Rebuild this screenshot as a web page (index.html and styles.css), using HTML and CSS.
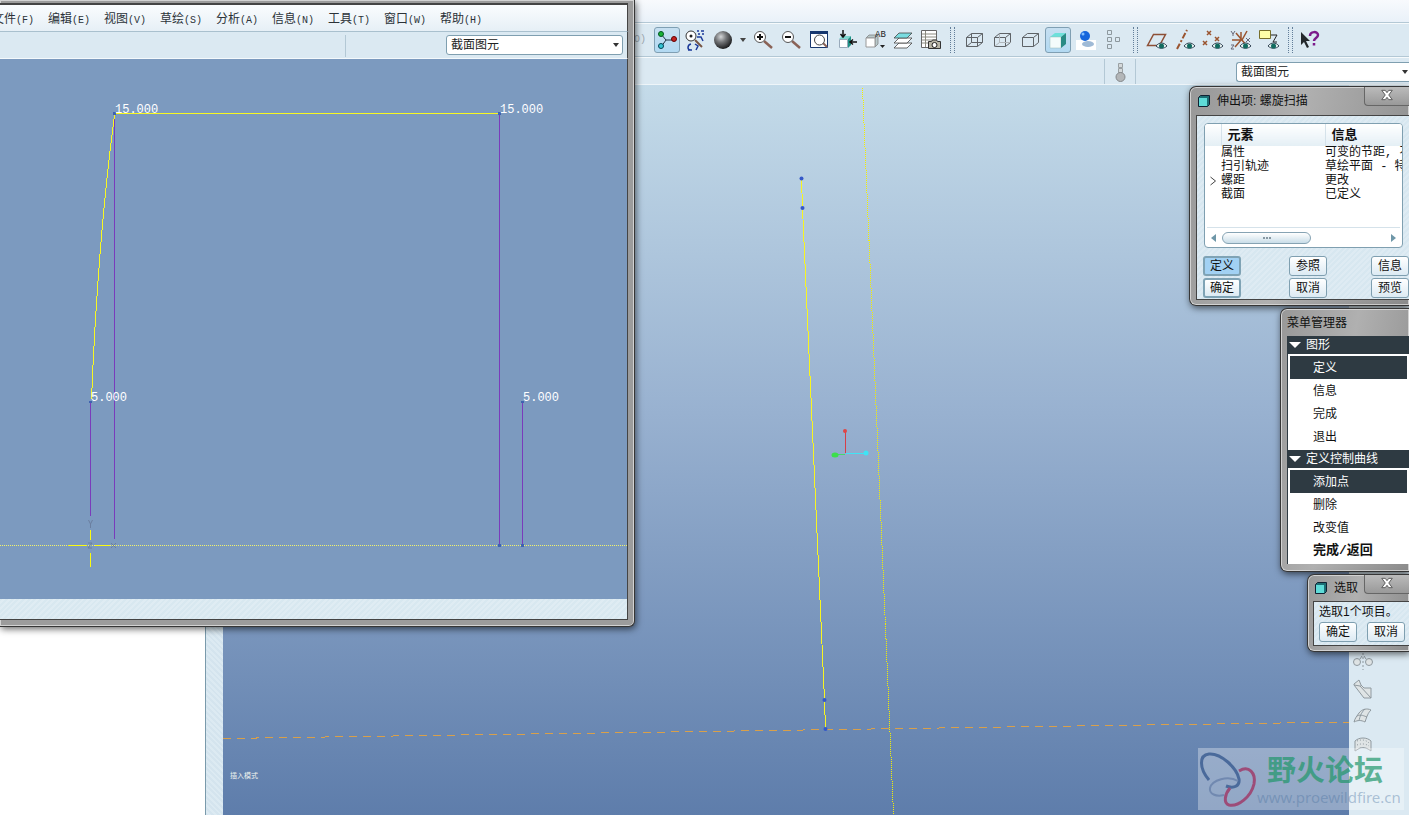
FILE: index.html
```html
<!DOCTYPE html>
<html lang="zh-CN">
<head>
    <meta charset="UTF-8">
    <title>伸出项: 螺旋扫描</title>
    <meta name="viewport" content="width=device-width, initial-scale=1">
    <link rel="stylesheet" href="styles.css">
</head>
<body>
<div class="app">
    <div class="app-menu"></div>

    <div class="toolbar">
        <span class="toolbar-start">(O)</span>
        <button class="tool active" aria-label="旋转中心"><svg viewBox="0 0 24 24"><path d="M6 6l5 6h9M11 12l-5 7" fill="none" stroke="#234" stroke-width="1"/><circle cx="6" cy="6" r="2.5" fill="#19b336" stroke="#052"/><circle cx="19" cy="11" r="2.5" fill="#c32222" stroke="#600"/><circle cx="6" cy="18" r="2.5" fill="#35c5d5" stroke="#045"/></svg></button>
        <button class="tool" aria-label="定向模式"><svg viewBox="0 0 24 24" fill="none"><circle cx="8" cy="8" r="5" fill="#fff" stroke="#333"/><circle cx="8" cy="8" r="1.5" fill="#222"/><path d="M12 12l7 7" stroke="#754" stroke-width="2"/><path d="M14 3h2M18 3h3M15 6h2M19 6h2M14 9h4l2 4M8 16c-4 1-4 6 0 6M5 22h4M12 16l3 2-2 4" stroke="#1c3a9a" stroke-width="1.5"/></svg></button>
        <button class="tool" aria-label="外观库"><svg viewBox="0 0 24 24"><defs><radialGradient id="ball" cx=".38" cy=".32" r=".68"><stop offset="0" stop-color="#d4d6d8"/><stop offset=".45" stop-color="#747679"/><stop offset="1" stop-color="#1d1e20"/></radialGradient></defs><circle cx="12" cy="12" r="9" fill="url(#ball)"/></svg></button>
        <button class="tool drop" aria-label="更多外观"><svg viewBox="0 0 10 24"><path d="M2 10h6l-3 4z" fill="#444"/></svg></button>
        <button class="tool" aria-label="放大"><svg viewBox="0 0 24 24" fill="none"><path d="M13 13l8 7" stroke="#8a6256" stroke-width="2.5"/><circle cx="9" cy="9" r="5.5" fill="#fff" stroke="#555"/><path d="M9 6v6M6 9h6" stroke="#111" stroke-width="2"/></svg></button>
        <button class="tool" aria-label="缩小"><svg viewBox="0 0 24 24" fill="none"><path d="M13 13l8 7" stroke="#8a6256" stroke-width="2.5"/><circle cx="9" cy="9" r="5.5" fill="#fff" stroke="#555"/><path d="M6 9h6" stroke="#111" stroke-width="2"/></svg></button>
        <button class="tool" aria-label="重新调整"><svg viewBox="0 0 24 24" fill="none"><path d="M3.5 3.5h17v16h-17z" fill="#fff" stroke="#17376e"/><path d="M3 3h18v3H3z" fill="#17376e"/><path d="M16 15l4 4" stroke="#8a6256" stroke-width="2"/><circle cx="12.5" cy="12" r="5" fill="#fff" stroke="#444"/></svg></button>
        <button class="tool" aria-label="重定向"><svg viewBox="0 0 24 24"><path d="M4 11l3-3h9l-3 3z" fill="#7fd6cf"/><path d="M4.5 11.5h8v8h-8z" fill="#fff" stroke="#9ab"/><path d="M13 11l3-3v9l-3 3z" fill="#1f9185"/><path d="M8 2v6M5.500 6L8 9l2.500-3M22 14h-6M18 11.500L15 14l3 2.500" fill="none" stroke="#111" stroke-width="1.5"/></svg></button>
        <button class="tool" aria-label="保存视图"><svg viewBox="0 0 24 24"><path d="M3 10l3-3h9l-3 3zM12 10l3-3v9l-3 3z" fill="#b9c9cb" stroke="#777" stroke-width=".7"/><path d="M3 10h9v9H3z" fill="#fff" stroke="#999"/><text x="12" y="9" class="icon-text">AB</text><path d="M17 17h5l-2.500 3z" fill="#222"/></svg></button>
        <button class="tool" aria-label="图层"><svg viewBox="0 0 24 24" stroke="#444" stroke-width=".8"><path d="M3 20l5-5h13l-5 5z" fill="#fff"/><path d="M3 15l5-5h13l-5 5z" fill="#fff"/><path d="M3 10l5-5h13l-5 5z" fill="#79dce0"/></svg></button>
        <button class="tool" aria-label="视图管理器"><svg viewBox="0 0 24 24"><path d="M2.500 2.500h15v17h-15z" fill="#fff" stroke="#666"/><path d="M3 6h14M3 9h14M3 12h14M3 15h14M6.500 3v16" stroke="#8b8b80" fill="none"/><path d="M9.500 13.500h3l1-1.500h4l1 1.500h3v7h-12z" fill="#b8b5a6" stroke="#333"/><circle cx="15.500" cy="17" r="2.500" fill="#fff" stroke="#222"/></svg></button>
        <span class="grip"></span>
        <button class="tool" aria-label="线框"><svg viewBox="0 0 24 24" class="line"><path d="M4.500 9.500h11v9h-11zM9.500 5.500h11v9h-11zM4.500 9.500l5-4M15.500 9.500l5-4M4.500 18.500l5-4M15.500 18.500l5-4"/></svg></button>
        <button class="tool" aria-label="隐藏线"><svg viewBox="0 0 24 24" class="line"><path d="M4.500 9.500h11v9h-11zM4.500 9.500l5-4h11v9l-5 4M15.500 9.500l5-4"/><path d="M9.500 6v8.500h11M4.500 18.500l5-4" stroke="#b0b6ba"/></svg></button>
        <button class="tool" aria-label="无隐藏线"><svg viewBox="0 0 24 24" class="line"><path d="M4.500 9.500h11v9h-11zM4.500 9.500l5-4h11v9l-5 4M15.500 9.500l5-4"/></svg></button>
        <button class="tool active" aria-label="着色"><svg viewBox="0 0 24 24"><path d="M4 9l5-4h11l-5 4z" fill="#6ee0da"/><path d="M4 9h11v11H4z" fill="#f4fbfb" stroke="#9bb" stroke-width=".5"/><path d="M15 9l5-4v11l-5 4z" fill="#288a85"/></svg></button>
        <button class="tool" aria-label="增强的真实感"><svg viewBox="0 0 24 24"><path d="M2 12h20v10H2z" fill="#fff"/><ellipse cx="14" cy="16" rx="6" ry="3" fill="#9fbad6"/><circle cx="11" cy="8" r="5" fill="#1566dc"/><circle cx="9" cy="6" r="1.500" fill="#82c0ff"/></svg></button>
        <button class="tool" aria-label="模型树"><svg viewBox="0 0 24 24" fill="none" stroke="#8d989e"><path d="M5.500 2.500h4v4h-4zM5.500 9.500h4v4h-4zM5.500 16.500h4v4h-4zM13.500 9.500h4v4h-4z"/></svg></button>
        <span class="grip"></span>
        <button class="tool" aria-label="基准平面"><svg viewBox="0 0 24 24"><path d="M2.500 17.500l6-11h12l-6 11z" fill="none" stroke="#8d4f36" stroke-width="1.5"/><use href="#eye"/></svg></button>
        <button class="tool" aria-label="基准轴"><svg viewBox="0 0 24 24"><path d="M4 21L14 2" fill="none" stroke="#9a542f" stroke-width="2" stroke-dasharray="6 2 2 2"/><use href="#eye"/></svg></button>
        <button class="tool" aria-label="基准点"><svg viewBox="0 0 24 24"><path d="M6 3l4 4M10 3L6 7M14 9l4 4M18 9l-4 4M2 13l4 4M6 13l-4 4" fill="none" stroke="#9a542f" stroke-width="1.5"/><use href="#eye"/></svg></button>
        <button class="tool" aria-label="坐标系"><svg viewBox="0 0 24 24"><path d="M3 12h10l5-9M7 5l11 13M12 12l-6 7M12 12V4" fill="none" stroke="#9a542f" stroke-width="1.5"/><path d="M2 3l2 3 2-3M4 6v2M17 10l4 4M21 10l-4 4M2 17h3l-3 4h3" fill="none" stroke="#667"/><use href="#eye"/></svg></button>
        <button class="tool" aria-label="注释"><svg viewBox="0 0 24 24"><path d="M2.500 2.500h11v8h-11z" fill="#ffffa8" stroke="#776f2b"/><path d="M14 7h6l-4 7h4" fill="none" stroke="#222"/><use href="#eye"/></svg></button>
        <span class="grip"></span>
        <button class="tool" aria-label="帮助"><svg viewBox="0 0 24 24"><path d="M1 4v13l3-3 3 6 2-1-3-6h4z" fill="#24292d"/><path d="M10 8c0-5 8-5 8-1 0 3-4 3-4 6M14 15v2.500" fill="none" stroke="#7c1a8b" stroke-width="2.5"/></svg></button>
    </div>

    <div class="filter-bar">
        <div class="status-light"><svg viewBox="0 0 14 22" width="14" height="22"><path d="M5.500 2.500h4v4h-4zM5.500 7.500h4v4h-4z" fill="#d4d9db" stroke="#9aa0a3"/><circle cx="7.500" cy="16" r="4.500" fill="#b3b6b8" stroke="#85898c"/></svg></div>
        <div class="combo main-combo"><select aria-label="选取过滤器"><option>截面图元</option></select></div>
    </div>

    <div class="work">
        <div class="tree"></div>
        <div class="sash"></div>
        <div class="viewport">
            <svg class="model">
                <path class="crisp" d="M639.500 3L670.500 730" fill="none" stroke="#f4f000" stroke-dasharray="1 1"/>
                <path class="crisp" d="M0 653.500L1126 637" fill="none" stroke="#d9a04a" stroke-dasharray="8 6"/>
                <path class="crisp" d="M578.500 93l1 30 22 492 1 29" fill="none" stroke="#f8f520"/>
                <g fill="#3558c8"><circle cx="578.500" cy="93.500" r="2"/><circle cx="579.500" cy="123" r="2"/><circle cx="601.500" cy="615" r="2"/><circle cx="602.500" cy="644" r="2"/></g>
                <path d="M622.500 347v21" stroke="#d63f48"/><path d="M623 368.500h20" stroke="#3fe4f5"/><path d="M613 369.500h9" stroke="#45d96c"/>
                <circle cx="622" cy="346" r="2" fill="#e04545"/><circle cx="643" cy="368" r="2.500" fill="#3fe4f5"/><ellipse cx="612" cy="370" rx="3.500" ry="2.500" fill="#3ce04b"/>
                <text x="7" y="693" class="mode">插入模式</text>
            </svg>
        </div>
        <div class="side-tools">
            <button class="tool" aria-label="镜像"><svg viewBox="0 0 24 24" class="ghost"><circle cx="6" cy="13" r="3.500"/><path d="M9 10l2-3M15 10l-2-3"/><circle cx="18" cy="13" r="3.500"/><path d="M12 4v17" stroke-dasharray="2 2"/></svg></button>
            <button class="tool" aria-label="延伸"><svg viewBox="0 0 24 24" class="ghost"><path d="M3 7l5-4 2 5 3 3h7v10h-7L3 8z"/><path d="M3 8l6 1 1 0M9 9l11 12"/></svg></button>
            <button class="tool" aria-label="修剪"><svg viewBox="0 0 24 24" class="ghost"><path d="M3 17c1-4 3-6 5-9 3-4 8-5 12-3-3 3-4 6-6 12-4-2-7-2-11 0zM6 11c4-2 7 0 10 1M14 4c-4 4-5 7-6 12"/></svg></button>
            <button class="tool" aria-label="曲面"><svg viewBox="0 0 24 24" class="ghost"><path d="M4 8c4-4 12-4 16 0v10c-4-3-7-4-11-3l-5 3z"/><path d="M6 8c5-2 9-1 12 2M6 12c5-2 9-1 12 1" stroke-dasharray="1 2"/></svg></button>
        </div>
    </div>
</div>

<!-- 草绘子窗口 -->
<section class="window sketch">
    <nav class="menu">
        <button>文件<span>(F)</span></button>
        <button>编辑<span>(E)</span></button>
        <button>视图<span>(V)</span></button>
        <button>草绘<span>(S)</span></button>
        <button>分析<span>(A)</span></button>
        <button>信息<span>(N)</span></button>
        <button>工具<span>(T)</span></button>
        <button>窗口<span>(W)</span></button>
        <button>帮助<span>(H)</span></button>
    </nav>
    <div class="sketch-bar">
        <div class="combo"><select aria-label="草绘过滤器"><option>截面图元</option></select></div>
    </div>
    <div class="sketch-area">
        <svg>
            <path class="crisp" d="M0 486.500h628" stroke="#f4f46a" stroke-dasharray="1 1"/>
            <path class="crisp" d="M114.500 56v424M499.500 56v430M522.500 344v142M90.500 344v113" stroke="#7a3bbb"/>
            <path class="crisp" d="M114.500 54.500h385M114.500 56Q98 180 91.500 340" fill="none" stroke="#f8f820"/>
            <path class="crisp" d="M68 486.500h19M95 486.500h15M90.500 471v10M90.500 494v14" stroke="#fbfb10"/>
            <path d="M88.500 461l2 4 2-4M90.500 465v4M88 484h4l-4 5h4M111 484l5 5M116 484l-5 5" fill="none" stroke="#6b7fa0"/>
            <path d="M113 53h3v3h-3zM498 53h3v3h-3zM498 485h3v3h-3zM521 485h3v3h-3zM89 342h3v2h-3zM521 342h3v2h-3z" fill="#3f63b0"/>
            <g class="dims"><text x="115" y="54">15.000</text><text x="500" y="54">15.000</text><text x="91" y="342">5.000</text><text x="523" y="342">5.000</text></g>
        </svg>
    </div>
    <div class="sketch-status"></div>
</section>

<!-- 特征对话框 -->
<section class="window dialog feature">
    <header>
        <svg class="cube" viewBox="0 0 14 14"><path d="M1.500 3.500l2-2h9v9l-2 2h-9z" fill="#1d6f74" stroke="#123"/><path d="M2 4h8v8H2z" fill="#5fdcd8"/></svg>
        <h2>伸出项: 螺旋扫描</h2>
        <button class="close" aria-label="关闭"><svg viewBox="0 0 12 10"><use href="#cross"/></svg></button>
    </header>
    <div class="dialog-body">
        <div class="list">
            <table>
                <thead><tr><th class="mark"></th><th class="name">元素</th><th>信息</th></tr></thead>
                <tbody>
                    <tr><td></td><td>属性</td><td>可变的节距, 不</td></tr>
                    <tr><td></td><td>扫引轨迹</td><td>草绘平面 - 特</td></tr>
                    <tr><td class="arrow"><svg viewBox="0 0 6 10" width="6" height="10"><path d="M.5 1l5 4-5 4" fill="none" stroke="#444"/></svg></td><td>螺距</td><td>更改</td></tr>
                    <tr><td></td><td>截面</td><td>已定义</td></tr>
                </tbody>
            </table>
            <div class="scroll"><i class="left"></i><span class="thumb"></span><i class="right"></i></div>
        </div>
        <div class="actions">
            <button class="btn current">定义</button><button class="btn">参照</button><button class="btn">信息</button>
            <button class="btn default">确定</button><button class="btn">取消</button><button class="btn">预览</button>
        </div>
    </div>
</section>

<!-- 菜单管理器 -->
<section class="window dialog manager">
    <header><h2>菜单管理器</h2></header>
    <div class="manager-body">
        <h3>图形</h3>
        <div class="options">
            <button class="selected">定义</button>
            <button>信息</button>
            <button>完成</button>
            <button>退出</button>
        </div>
        <h3>定义控制曲线</h3>
        <div class="options">
            <button class="selected">添加点</button>
            <button>删除</button>
            <button>改变值</button>
            <button class="strong">完成/返回</button>
        </div>
    </div>
</section>

<section class="window dialog pick">
    <header>
        <svg class="cube" viewBox="0 0 14 14"><path d="M1.500 3.500l2-2h9v9l-2 2h-9z" fill="#1d6f74" stroke="#123"/><path d="M2 4h8v8H2z" fill="#5fdcd8"/></svg>
        <h2>选取</h2>
        <button class="close" aria-label="关闭"><svg viewBox="0 0 12 10"><use href="#cross"/></svg></button>
    </header>
    <div class="dialog-body">
        <p>选取1个项目。</p>
        <div class="pick-actions">
            <button class="btn">确定</button>
            <button class="btn">取消</button>
        </div>
    </div>
</section>

<div class="watermark">
    <svg viewBox="0 0 60 62" width="60" height="62" fill="none">
        <path d="M11 32C1 20 1 7 11 6c12-1 28 14 30 25 1 7-5 10-13 7" stroke="#4a6a9b" stroke-width="3"/>
        <path d="M40 33c-10-6-26-1-28 7-1 6 6 9 14 7" stroke="#7189b0" stroke-width="2"/>
        <path d="M41 23c10-6 17 2 15 13-3 13-16 23-25 21-6-2-4-11 1-17" stroke="#9d4c78" stroke-width="3"/>
    </svg>
    <div class="brand"><strong>野火论坛</strong><a href="#">www.proewildfire.cn</a></div>
</div>

<svg class="symbols">
    <g id="eye"><path d="M11 18c3-4 8-4 11 0-3 3-8 3-11 0z" fill="#e6f2f0" stroke="#345"/><circle cx="16.500" cy="18" r="2.500" fill="#126b60"/></g>
    <path id="cross" d="M1.500 1h3L6 3l1.500-2h3L7.500 5l3 4h-3L6 7 4.500 9h-3l3-4z" fill="#fff" stroke="#555" stroke-width=".8"/>
</svg>
</body>
</html>
```

FILE: styles.css
```css
* { box-sizing: border-box; }
body { margin: 0; height: 100vh; overflow: hidden; position: relative; background: #fff; color: #2b3238; font: 12px/14px "Liberation Sans", "Noto Sans CJK SC", sans-serif; }
button { font: inherit; color: inherit; border: 0; padding: 0; background: none; cursor: pointer; }
h2, h3, p { margin: 0; font-size: 12px; font-weight: normal; }

/* main window */
.app { height: 100%; display: flex; flex-direction: column; background: #dbe9f2; }
.app-menu { height: 23px; background: linear-gradient(#f8fafd, #e9f1f9); border-bottom: 1px solid #b3c8d5; }
.toolbar { height: 34px; display: flex; align-items: center; gap: 2px; border-top: 1px solid #f6fafc; border-bottom: 1px solid #b3c8d5; }
.toolbar-start { width: 652px; flex: none; padding-right: 6px; text-align: right; color: #9ba8b0; font: 10px/14px "Liberation Mono", monospace; }
.tool { width: 26px; height: 26px; flex: none; display: flex; align-items: center; justify-content: center; }
.tool svg { width: 24px; height: 24px; flex: none; }
.tool.drop, .tool.drop svg { width: 10px; }
.tool.active { background: linear-gradient(#c6dff1, #b2d9f2); border: 1px solid #7f9fb3; border-radius: 3px; }
.icon-text { font: 9px "Liberation Mono", monospace; fill: #222; }
.line { fill: none; stroke: #5e6367; }
.ghost { fill: #dfe4e5; stroke: #8f999f; stroke-width: 1; }
.crisp { shape-rendering: crispEdges; }
.grip { width: 13px; height: 26px; flex: none; display: flex; justify-content: center; }
.grip::before { content: ""; width: 3px; border-left: 1px dotted #637e99; border-right: 1px dotted #637e99; }
.filter-bar { height: 28px; display: flex; justify-content: flex-end; align-items: center; padding-top: 1px; border-top: 1px solid #f6fafc; border-bottom: 1px solid #eef5f9; }
.status-light { width: 32px; height: 25px; margin-right: 100px; display: flex; align-items: center; justify-content: center; border-left: 1px solid #b3c8d5; border-right: 1px solid #b3c8d5; }
.work { flex: 1; min-height: 0; display: flex; }
.tree { width: 205px; background: #fff; }
.sash { width: 18px; border-left: 1px solid #7a9aab; background: repeating-linear-gradient(45deg, #d4e4ee 0 2px, #dceaf2 2px 4px); }
.viewport { flex: 1; min-width: 0; background: linear-gradient(#c4dbe9, #98b1d0 45%, #5e7dab); }
.model { display: block; width: 100%; height: 100%; }
.mode { font: 7px "Noto Sans CJK SC", sans-serif; fill: #eef3ee; }
.side-tools { width: 60px; padding: 0 0 57px 1px; display: flex; flex-direction: column; justify-content: flex-end; gap: 2px; }

.combo { position: relative; height: 20px; width: 177px; }
.combo select { width: 100%; height: 100%; padding: 0 4px; font: inherit; color: #222; background: #fff; border: 1px solid #7f9fb0; border-radius: 3px; appearance: none; }
.combo::after { content: ""; position: absolute; right: 4px; top: 8px; border: 3px solid transparent; border-top: 4px solid #333; border-bottom: 0; }
.main-combo { width: 173px; }
.main-combo select { border-right: 0; border-radius: 3px 0 0 3px; }
.main-combo::after { right: 1px; }

/* floating windows */
.window { position: absolute; background: #9c9c9c; border: 1px solid #363636; box-shadow: inset 0 0 0 1px #d2d2d2, 1px 2px 7px rgba(0,0,0,0.6); }
.sketch { left: 0; top: 0; width: 635px; height: 627px; padding: 3px 6px 6px 0; border-width: 0 1px 1px 0; border-radius: 0 0 6px 0; display: flex; flex-direction: column; }
.menu { height: 29px; flex: none; display: flex; overflow: hidden; background: linear-gradient(#fafcfe, #e6eff6); border-top: 2px solid #444; border-right: 1px solid #444; border-bottom: 1px solid #a9c0ce; }
.menu button { width: 56px; flex: none; padding-top: 4px; white-space: nowrap; }
.menu button:first-child { margin-left: -15px; }
.menu span { font: 10px/14px "Liberation Mono", monospace; }
.sketch-bar { height: 27px; flex: none; display: flex; justify-content: flex-end; padding: 3px 4px 0 0; background: #dbe9f2; border-right: 1px solid #444; border-bottom: 1px solid #f4f9fc; }
.sketch-bar::before { content: ""; width: 1px; height: 22px; margin-right: 100px; background: #b3c8d5; }
.sketch-area { flex: 1; min-height: 0; background: #7c9abf; border-right: 1px solid #444; }
.sketch-area svg { display: block; width: 100%; height: 100%; }
.dims { font: 12px "Liberation Mono", monospace; fill: #fff; }
.sketch-status { height: 21px; flex: none; background: repeating-linear-gradient(135deg, #d8e8f0 0 2px, #dfecf3 2px 4px); border-right: 1px solid #444; border-bottom: 1px solid #444; }

.dialog { right: 0; border-right: 0; border-radius: 7px 0 0 7px; padding: 0 0 6px 6px; background: linear-gradient(100deg, #989898, #b0b0b0 45%, #8c8c8c); color: #111; }
.dialog header { height: 28px; display: flex; align-items: center; gap: 6px; }
.dialog h2 { flex: 1; }
.cube { width: 14px; height: 14px; margin-left: 1px; }
.close { align-self: flex-start; width: 45px; height: 19px; border: 1px solid #666; border-top: 0; border-right: 0; border-radius: 0 0 0 4px; background: linear-gradient(#bbb, #999); }
.close svg { width: 14px; height: 12px; }
.dialog-body { border: 1px solid #444; border-right: 0; background: repeating-linear-gradient(135deg, #d7e7f0 0 2px, #deebf3 2px 4px); }
.feature { top: 86px; width: 220px; height: 220px; }
.feature .dialog-body { height: 185px; padding: 7px 0 0 7px; }
.list { width: 199px; height: 125px; display: flex; flex-direction: column; overflow: hidden; background: #fff; border: 1px solid #7f9fb0; border-radius: 4px; }
table { width: 220px; border-collapse: collapse; table-layout: fixed; white-space: nowrap; }
th { height: 22px; padding: 0 0 0 6px; font-size: 13px; text-align: left; background: linear-gradient(#fff, #e4eff5); border-right: 1px solid #d5e2ea; }
.mark { width: 16px; }
.name { width: 104px; }
td { height: 14px; padding: 0; line-height: 14px; font-family: "Liberation Mono", "Noto Sans CJK SC", monospace; }
.arrow { padding-left: 5px; line-height: 0; }
.scroll { height: 20px; flex: none; display: flex; align-items: center; margin: auto 2px 0; padding: 0 4px; border-top: 1px solid #d5e2ea; }
.scroll i { border: 4px solid transparent; }
.scroll .left { border-right: 5px solid #6f97a8; border-left: 0; margin-right: 6px; }
.scroll .right { border-left: 5px solid #6f97a8; border-right: 0; margin-left: auto; }
.thumb { width: 89px; height: 12px; display: flex; align-items: center; justify-content: center; border: 1px solid #86a3b3; border-radius: 6px; background: linear-gradient(#fff, #c9dde8); }
.thumb::before { content: ""; width: 8px; border-top: 2px dotted #8798a2; }
.actions { display: grid; grid-template-columns: 86px 82px 38px; row-gap: 2px; margin: 8px 0 0 -1px; }
.btn { width: 38px; height: 20px; border: 1px solid #7f9fb0; border-radius: 3px; background: linear-gradient(#fff, #dceaf3); color: #111; }
.btn.default { border: 2px solid #7fa3b5; }
.btn.current { border: 2px solid #7fa3b5; background: #a2d1f3; }

.manager { top: 308px; width: 129px; height: 264px; }
.manager header { height: 27px; }
.manager-body { border-left: 1px solid #2e3a42; }
.manager h3 { height: 18px; display: flex; align-items: center; gap: 5px; padding-left: 1px; background: #2e3a42; color: #fff; }
.manager h3::before { content: ""; border: 6px solid transparent; border-top-color: #fff; border-bottom: 0; }
.options { padding: 2px; background: #fff; }
.options button { display: block; width: 100%; height: 23px; padding-left: 23px; text-align: left; }
.options .selected { background: #2e3a42; color: #fff; }
.options .strong { font: bold 13px/14px "Liberation Mono", "Noto Sans CJK SC", monospace; }

.pick { top: 574px; width: 102px; height: 78px; padding-left: 5px; }
.pick header { height: 26px; }
.pick .dialog-body { height: 45px; padding: 2px 0 0 5px; }
.pick-actions { display: flex; gap: 10px; }
.pick p { height: 18px; line-height: 16px; }

.watermark { position: absolute; right: 5px; bottom: 5px; width: 206px; height: 62px; display: flex; background: rgba(255,255,255,0.32); }
.watermark svg { flex: none; }
.brand { display: flex; flex-direction: column; }
.brand strong { padding-left: 9px; font: bold 29px/40px "Noto Sans CJK SC", sans-serif; color: rgba(30,150,105,0.7); }
.brand a { margin-left: -1px; font: 15px/18px "Noto Sans", sans-serif; color: rgba(75,115,160,0.4); text-decoration: none; }
.symbols { position: absolute; width: 0; height: 0; }
```
